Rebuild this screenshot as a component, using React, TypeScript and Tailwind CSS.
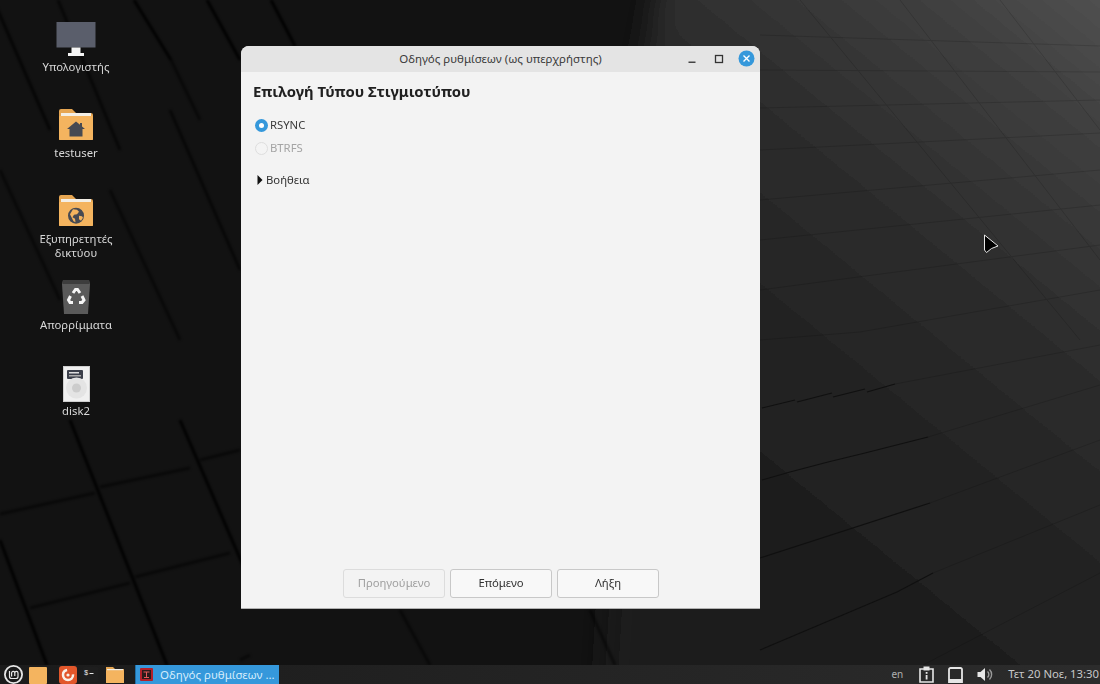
const FONT = "font-['Noto_Sans',sans-serif]";

// wallpaper lines: [x1, y1, x2, y2, opacity]
const TILE_LINES: number[][] = [
  [-4, 6, 50, 130, 0.7],
  [58, 0, 120, 150, 0.6],
  [134, 0, 171, 60, 0.9],
  [171, 60, 200, 120, 0.5],
  [207, 0, 240, 60, 0.9],
  [271, 0, 295, 46, 0.9],
  [0, 170, 60, 300, 0.5],
  [110, 190, 180, 340, 0.5],
  [170, 110, 240, 270, 0.6],
  [70, 420, 167, 665, 0.9],
  [180, 420, 245, 570, 0.9],
  [0, 540, 47, 665, 0.9],
  [0, 514, 95, 493, 0.5],
  [100, 487, 190, 468, 0.5],
  [200, 460, 240, 450, 0.5],
  [30, 608, 130, 583, 0.5],
  [135, 577, 230, 553, 0.5],
  [240, 660, 250, 655, 0.5],
  [400, 610, 430, 665, 0.5],
  [590, 610, 615, 665, 0.5],
];

const DASH_LINES: number[][] = [
  [762, 408, 795, 400],
  [797, 402, 832, 393],
  [833, 397, 865, 389],
  [867, 392, 895, 384],
  [762, 480, 790, 472],
  [790, 472, 828, 462],
  [828, 462, 865, 453],
  [865, 453, 928, 437],
  [760, 558, 930, 503],
  [760, 650, 897, 592],
  [897, 592, 933, 573],
];

const FAINT_LINES: number[][] = [
  [760, 35, 1100, 46],
  [760, 70, 1100, 72],
  [760, 108, 1100, 100],
  [760, 150, 1100, 133],
  [760, 200, 1100, 170],
  [760, 240, 1100, 205],
  [760, 290, 1100, 245],
  [760, 340, 860, 332],
  [860, 332, 1100, 290],
  [895, 384, 1100, 345],
  [928, 437, 1100, 385],
  [930, 503, 1100, 440],
  [933, 573, 1100, 505],
  [923, 665, 1100, 573],
  [1000, 0, 1100, 130],
  [900, 0, 1100, 260],
  [800, 0, 1080, 340],
];

const Wallpaper = () => (
  <svg className="absolute inset-0" width="1100" height="684" viewBox="0 0 1100 684">
    <defs>
      <linearGradient id="plane" gradientUnits="userSpaceOnUse" x1="1100" y1="0" x2="640" y2="560">
        <stop offset="0" stopColor="#505050" />
        <stop offset="0.15" stopColor="#3f3f3f" />
        <stop offset="0.3" stopColor="#343434" />
        <stop offset="0.37" stopColor="#2e2e2e" />
        <stop offset="0.66" stopColor="#222222" />
        <stop offset="0.85" stopColor="#1e1e1e" />
        <stop offset="1" stopColor="#1a1a1a" />
      </linearGradient>
      <filter id="soft">
        <feGaussianBlur stdDeviation="1" />
      </filter>
      <filter id="softer">
        <feGaussianBlur stdDeviation="14" />
      </filter>
    </defs>
    <rect width="1100" height="684" fill="#121212" />
    <polygon points="668,-60 1200,-60 1200,760 600,760 640,80" fill="url(#plane)" filter="url(#softer)" />
    <g stroke="#060606" strokeWidth="3" filter="url(#soft)">
      {TILE_LINES.map(([x1, y1, x2, y2, o], i) => (
        <line key={i} x1={x1} y1={y1} x2={x2} y2={y2} opacity={o} />
      ))}
    </g>
    <g stroke="#101010" strokeWidth="1.2">
      {DASH_LINES.map(([x1, y1, x2, y2], i) => (
        <line key={i} x1={x1} y1={y1} x2={x2} y2={y2} />
      ))}
    </g>
    <g stroke="#000000" strokeWidth="1" opacity="0.14">
      {FAINT_LINES.map(([x1, y1, x2, y2], i) => (
        <line key={i} x1={x1} y1={y1} x2={x2} y2={y2} />
      ))}
    </g>
  </svg>
);

const ComputerIcon = () => (
  <svg width="40" height="36" viewBox="0 0 40 36">
    <rect x="0.5" y="1" width="39" height="25.5" fill="#5a5e6b" />
    <rect x="15.5" y="26.5" width="9" height="5.5" fill="#f4f4f4" />
    <rect x="12" y="32" width="16" height="3" fill="#f4f4f4" />
  </svg>
);

const FolderBase = ({ children }: { children?: React.ReactNode }) => (
  <svg width="36" height="34" viewBox="0 0 36 34">
    <path d="M1 4a2 2 0 0 1 2-2h11l4 4h15a2 2 0 0 1 2 2v24a1 1 0 0 1-1 1H2a1 1 0 0 1-1-1z" fill="#e6a652" />
    <rect x="3" y="6" width="30" height="3" fill="#f3efe6" />
    <rect x="1" y="9" width="34" height="24" rx="1" fill="#f4b45f" />
    {children}
  </svg>
);

const HomeFolderIcon = () => (
  <FolderBase>
    <path d="M18 14.5l4 3.2V16h2v3.4l3 2.6h-2.5v7.5h-13V22H9z" fill="#474a52" />
  </FolderBase>
);

const WebFolderIcon = () => (
  <FolderBase>
    <g transform="translate(0 2.7)">
      <circle cx="18" cy="20" r="8" fill="#474a52" />
      <path d="M15 13.5l4 .5 2 2-2 2.5-3 .5-1.5 2.5 2.5 1.5.5 3.5-2-1-2-4-1.5-3zM21 20l3 .5 1 1.5-2 3-2-1.5z" fill="#f4b45f" />
    </g>
  </FolderBase>
);

const TrashIcon = () => (
  <svg width="32" height="36" viewBox="0 0 32 36">
    <path d="M3 1h26l1 4-2 30H4L2 5z" fill="#5a5a5a" />
    <path d="M2.5 5L3 1h26l.5 4z" fill="#3d3d3d" />
    <g fill="none" stroke="#f5f5f5" strokeWidth="3">
      <path d="M13 14l2.5-3.5h2L20 14" />
      <path d="M22 17l2 4-2 2.5h-3" />
      <path d="M13 23.5h-3l-1.5-2.5 2-4" />
    </g>
  </svg>
);

const DiskIcon = () => (
  <svg width="27" height="37" viewBox="0 0 27 37">
    <rect x="0.5" y="1.5" width="26" height="35" fill="#f0f0f0" stroke="#cfcfcf" />
    <rect x="4" y="5" width="16" height="9" rx="1" fill="#3b3f4a" />
    <rect x="6" y="7" width="10" height="1.5" fill="#dddddd" />
    <rect x="6" y="10" width="12" height="1.5" fill="#aaaaaa" />
    <circle cx="13.5" cy="23" r="10.5" fill="#e4e4e4" />
    <circle cx="13.5" cy="23" r="4.5" fill="#cccccc" />
  </svg>
);

const DESKTOP_ITEMS = [
  { label: "Υπολογιστής", icon: <ComputerIcon /> },
  { label: "testuser", icon: <HomeFolderIcon /> },
  { label: "Εξυπηρετητές δικτύου", icon: <WebFolderIcon /> },
  { label: "Απορρίμματα", icon: <TrashIcon /> },
  { label: "disk2", icon: <DiskIcon /> },
];

const DesktopIcons = () => (
  <div className="flex flex-col w-[86px] ml-[33px] pt-[21px]">
    {DESKTOP_ITEMS.map((item) => (
      <div key={item.label} className="h-[86px] flex flex-col items-center">
        <div className="h-[36px] flex items-start justify-center">{item.icon}</div>
        <div className="mt-[3px] w-[86px] text-center text-[11.3px] leading-[14px] text-[#d8d8d8]">
          {item.label}
        </div>
      </div>
    ))}
  </div>
);

const WizardButton = ({ label, disabled }: { label: string; disabled?: boolean }) => (
  <button
    type="button"
    className={
      disabled
        ? "w-[102px] h-[29px] rounded-[3px] border border-[#dcdcdc] bg-[#f3f3f3] text-[11.3px] text-[#a0a0a0]"
        : "w-[102px] h-[29px] rounded-[3px] border border-[#c8c8c8] bg-[#f8f8f8] text-[11.3px] text-[#303030]"
    }
  >
    {label}
  </button>
);

const WizardWindow = () => (
  <div className="absolute left-[241px] top-[46px] w-[519px] h-[563px] flex flex-col rounded-t-[8px] bg-[#f3f3f3] border-b border-[#b0b0b0] overflow-hidden">
    <div className="h-[26px] shrink-0 relative flex items-center justify-center bg-[#e4e4e4] text-[11.5px] text-[#3a3a3a]">
      <span>Οδηγός ρυθμίσεων (ως υπερχρήστης)</span>
      <div className="absolute right-[5px] top-[4px] flex items-center gap-[11px]">
        <svg width="16" height="16" viewBox="0 0 16 16">
          <rect x="4.5" y="10.5" width="7" height="1.5" fill="#444444" />
        </svg>
        <svg width="16" height="16" viewBox="0 0 16 16">
          <rect x="4.5" y="4.5" width="7" height="7" fill="none" stroke="#333333" strokeWidth="1.3" />
        </svg>
        <svg width="17" height="17" viewBox="0 0 17 17">
          <circle cx="8.5" cy="8.5" r="8" fill="#3598db" />
          <path d="M5.5 5.5l6 6M11.5 5.5l-6 6" stroke="#ffffff" strokeWidth="1.4" />
        </svg>
      </div>
    </div>
    <div className="flex-1 flex flex-col pl-[12px] pt-[9px]">
      <h1 className="text-[14.85px] leading-[20px] font-bold text-[#202020]">Επιλογή Τύπου Στιγμιοτύπου</h1>
      <div className="mt-[17px] flex flex-col gap-[9px] pl-[2px]">
        <div className="flex items-center gap-[2px] h-[14px] text-[11.3px] text-[#3a3a3a]">
          <span className="w-[13px] h-[13px] rounded-full bg-[#3598db] flex items-center justify-center">
            <span className="w-[5px] h-[5px] rounded-full bg-white" />
          </span>
          <span>RSYNC</span>
        </div>
        <div className="flex items-center gap-[2px] h-[14px] text-[11.3px] text-[#a4a4a4]">
          <span className="w-[13px] h-[13px] rounded-full bg-[#f4f4f4] border border-[#dedede]" />
          <span>BTRFS</span>
        </div>
      </div>
      <div className="mt-[18px] flex items-center gap-[3px] pl-[4px] h-[14px] text-[11.3px] text-[#303030]">
        <svg width="6" height="10" viewBox="0 0 6 10">
          <path d="M0.5 0L5.5 5L0.5 10z" fill="#111111" />
        </svg>
        <span>Βοήθεια</span>
      </div>
      <div className="mt-auto mb-[10px] ml-[90px] flex gap-[5px]">
        <WizardButton label="Προηγούμενο" disabled />
        <WizardButton label="Επόμενο" />
        <WizardButton label="Λήξη" />
      </div>
    </div>
  </div>
);

const Cursor = () => (
  <svg className="absolute left-[982px] top-[233px]" width="18" height="22" viewBox="0 0 18 22">
    <path d="M2.5 2L16 13 9.5 15.5 4.5 19.5 2.5 17z" fill="#000000" stroke="#e8e8e8" strokeWidth="1" strokeLinejoin="round" />
  </svg>
);

const Taskbar = () => (
  <div className="absolute left-0 right-0 bottom-0 h-[19px] flex items-center bg-linear-to-r from-[#1b1b1b] to-[#2c2c2c] text-[11px] text-[#c8c8c8]">
    <div className="flex items-center w-[135px] h-full shrink-0">
      <svg className="ml-[4px]" width="19" height="19" viewBox="0 0 19 19">
        <circle cx="9.5" cy="9.5" r="8.6" fill="#1a1a1a" stroke="#e6e6e6" strokeWidth="1.8" />
        <path d="M5.5 6v5.5a2 2 0 0 0 2 2h4.5a2 2 0 0 0 2-2V8a1.6 1.6 0 0 0-3.2 0v3M10.8 8a1.6 1.6 0 0 0-3.2 0v3.5" fill="none" stroke="#e6e6e6" strokeWidth="1.2" />
      </svg>
      <div className="ml-[6px] w-[18px] h-[17px] mt-[2px] rounded-[1px] bg-[#f4b45f]" />
      <svg className="ml-[12px]" width="18" height="19" viewBox="0 0 18 19">
        <rect y="1" width="18" height="18" rx="3" fill="#e2572b" />
        <circle cx="9" cy="10" r="5" fill="none" stroke="#f8f2ea" strokeWidth="2.5" strokeDasharray="22 8" />
        <circle cx="9" cy="10" r="1.6" fill="#f8f2ea" />
      </svg>
      <svg className="ml-[6px]" width="15" height="15" viewBox="0 0 15 15">
        <rect width="15" height="15" rx="1" fill="#1e1e1e" />
        <text x="1" y="8" fontSize="7" fill="#e8e8e8" fontFamily="Liberation Mono">$</text>
        <rect x="6.5" y="6" width="4" height="1" fill="#e8e8e8" />
      </svg>
      <svg className="ml-[8px]" width="18" height="17" viewBox="0 0 18 17">
        <path d="M0 1h7l2 2h9v14H0z" fill="#e6a652" />
        <rect x="1" y="3" width="16" height="1.5" fill="#f3efe6" />
        <rect y="4.5" width="18" height="12.5" fill="#f4b45f" />
      </svg>
    </div>
    <div className="w-[144px] h-full shrink-0 flex items-center bg-[#3598db] border-l border-[#1f6ea6]">
      <svg className="ml-[4px]" width="13" height="13" viewBox="0 0 13 13">
        <rect width="13" height="13" rx="1" fill="#b3202a" />
        <rect x="2" y="2" width="9" height="9" fill="#2a1a1a" />
        <path d="M3.5 4h6M6.5 4v5.5M4 9.5h5" stroke="#e65a5a" strokeWidth="1" />
      </svg>
      <span className="ml-[7px] text-[11.5px] text-[#d4ecfb] whitespace-nowrap">Οδηγός ρυθμίσεων ...</span>
    </div>
    <div className="ml-auto flex items-center h-full pr-[1px]">
      <span className="text-[10px] text-[#b0b0b0]">en</span>
      <svg className="ml-[16px]" width="15" height="17" viewBox="0 0 15 17">
        <path d="M1 3h13v13H1z" fill="none" stroke="#e6e6e6" strokeWidth="1.6" />
        <rect x="4.5" y="0.5" width="6" height="4" fill="#e6e6e6" />
        <rect x="6.7" y="6" width="1.8" height="1.8" fill="#e6e6e6" />
        <rect x="6.7" y="9" width="1.8" height="4.5" fill="#e6e6e6" />
      </svg>
      <svg className="ml-[14px]" width="15" height="16" viewBox="0 0 15 16">
        <path d="M1 2.5a1.5 1.5 0 0 1 1.5-1.5h10a1.5 1.5 0 0 1 1.5 1.5V15H1z" fill="none" stroke="#e6e6e6" strokeWidth="1.8" />
        <path d="M4 4h7v7H4z" fill="#2a2a2a" />
        <rect x="1" y="12" width="13" height="3" fill="#e6e6e6" />
      </svg>
      <svg className="ml-[14px]" width="17" height="15" viewBox="0 0 17 15">
        <path d="M0.5 5h3L8 1v13L3.5 10h-3z" fill="#e6e6e6" />
        <path d="M10.5 4.5a4 4 0 0 1 0 6M12.5 2.5a7 7 0 0 1 0 10" fill="none" stroke="#9a9a9a" strokeWidth="1.4" />
      </svg>
      <span className="ml-[14px] text-[11.3px] text-[#c8c8c8] whitespace-nowrap">Τετ 20 Νοε, 13:30</span>
    </div>
  </div>
);

export default function App() {
  return (
    <div className={`relative w-[1100px] h-[684px] overflow-hidden ${FONT}`}>
      <Wallpaper />
      <div className="relative">
        <DesktopIcons />
      </div>
      <WizardWindow />
      <Cursor />
      <Taskbar />
    </div>
  );
}
